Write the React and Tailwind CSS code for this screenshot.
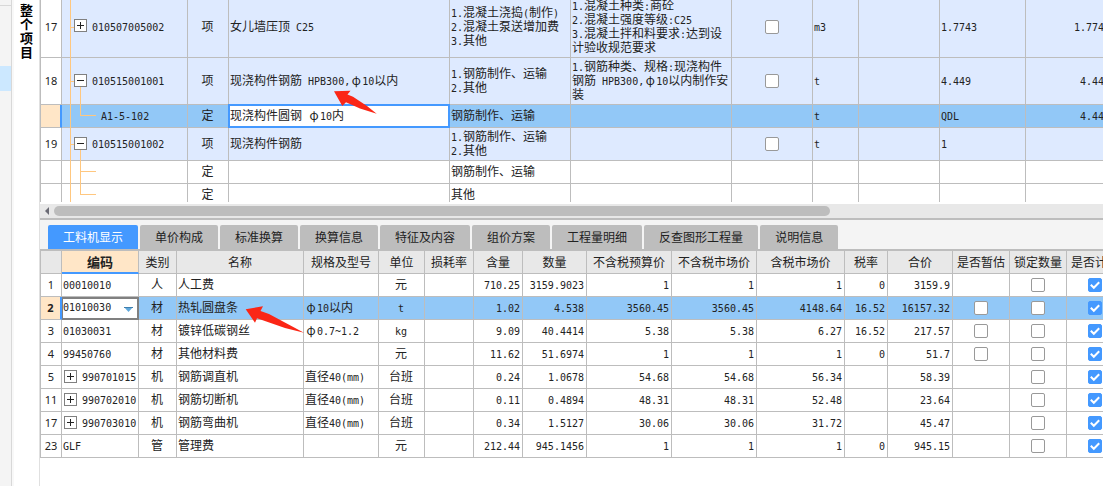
import { useState } from 'react'
import clsx from 'clsx'

const billCols = [
	'w-[21px]',
	'w-[126px]',
	'w-[41px]',
	'w-[221px]',
	'w-[121px]',
	'w-[161px]',
	'w-[81px]',
	'w-[46px]',
	'w-[81px]',
	'w-[86px]',
	'w-[87px]'
]

const billRows = [
	{
		no: '17',
		height: 'h-[62px]',
		code: '010507005002',
		sign: '+',
		kind: '项',
		name: '女儿墙压顶 C25',
		work: '1.混凝土浇捣(制作)\n2.混凝土泵送增加费\n3.其他',
		feature: '1.混凝土种类:商砼\n2.混凝土强度等级:C25\n3.混凝土拌和料要求:达到设\n计验收规范要求',
		unit: 'm3',
		expr: '1.7743',
		amount: '1.7743'
	},
	{
		no: '18',
		height: 'h-[47px]',
		code: '010515001001',
		sign: '-',
		kind: '项',
		name: '现浇构件钢筋 HPB300,φ10以内',
		work: '1.钢筋制作、运输\n2.其他',
		feature: '1.钢筋种类、规格:现浇构件\n钢筋 HPB300,φ10以内制作安\n装',
		unit: 't',
		expr: '4.449',
		amount: '4.449',
		arrow: true
	},
	{
		height: 'h-[23px]',
		child: 'last',
		code: 'A1-5-102',
		kind: '定',
		name: '现浇构件圆钢 φ10内',
		work: '钢筋制作、运输',
		unit: 't',
		expr: 'QDL',
		amount: '4.449',
		selected: true
	},
	{
		no: '19',
		height: 'h-[33px]',
		code: '010515001002',
		sign: '-',
		kind: '项',
		name: '现浇构件钢筋',
		work: '1.钢筋制作、运输\n2.其他',
		unit: 't',
		expr: '1'
	},
	{ height: 'h-[23px]', child: 'middle', kind: '定', work: '钢筋制作、运输' },
	{ height: 'h-[23px]', child: 'last', kind: '定', work: '其他' }
]

const tabs = [
	'工料机显示',
	'单价构成',
	'标准换算',
	'换算信息',
	'特征及内容',
	'组价方案',
	'工程量明细',
	'反查图形工程量',
	'说明信息'
]

const resourceCols = [
	{ width: 'w-[21px]', title: '' },
	{ width: 'w-[77px]', title: '编码' },
	{ width: 'w-[38px]', title: '类别' },
	{ width: 'w-[127px]', title: '名称' },
	{ width: 'w-[75px]', title: '规格及型号' },
	{ width: 'w-[46px]', title: '单位' },
	{ width: 'w-[49px]', title: '损耗率' },
	{ width: 'w-[49px]', title: '含量' },
	{ width: 'w-[64px]', title: '数量' },
	{ width: 'w-[85px]', title: '不含税预算价' },
	{ width: 'w-[85px]', title: '不含税市场价' },
	{ width: 'w-[88px]', title: '含税市场价' },
	{ width: 'w-[43px]', title: '税率' },
	{ width: 'w-[65px]', title: '合价' },
	{ width: 'w-[57px]', title: '是否暂估' },
	{ width: 'w-[57px]', title: '锁定数量' },
	{ width: 'w-[57px]', title: '是否计价' }
]

// nums: 含量, 数量, 不含税预算价, 不含税市场价, 含税市场价, 税率, 合价
const resources = [
	{ no: '1', code: '00010010', kind: '人', name: '人工费', unit: '元', nums: ['710.25', '3159.9023', '1', '1', '1', '0', '3159.9'] },
	{
		no: '2',
		code: '01010030',
		kind: '材',
		name: '热轧圆盘条',
		spec: 'φ10以内',
		unit: 't',
		nums: ['1.02', '4.538', '3560.45', '3560.45', '4148.64', '16.52', '16157.32'],
		estimate: true,
		selected: true
	},
	{
		no: '3',
		code: '01030031',
		kind: '材',
		name: '镀锌低碳钢丝',
		spec: 'φ0.7~1.2',
		unit: 'kg',
		nums: ['9.09', '40.4414', '5.38', '5.38', '6.27', '16.52', '217.57'],
		estimate: true
	},
	{
		no: '4',
		code: '99450760',
		kind: '材',
		name: '其他材料费',
		unit: '元',
		nums: ['11.62', '51.6974', '1', '1', '1', '0', '51.7'],
		estimate: true
	},
	{
		no: '5',
		code: '990701015',
		sign: '+',
		kind: '机',
		name: '钢筋调直机',
		spec: '直径40(mm)',
		unit: '台班',
		nums: ['0.24', '1.0678', '54.68', '54.68', '56.34', '', '58.39']
	},
	{
		no: '11',
		code: '990702010',
		sign: '+',
		kind: '机',
		name: '钢筋切断机',
		spec: '直径40(mm)',
		unit: '台班',
		nums: ['0.11', '0.4894', '48.31', '48.31', '52.48', '', '23.64']
	},
	{
		no: '17',
		code: '990703010',
		sign: '+',
		kind: '机',
		name: '钢筋弯曲机',
		spec: '直径40(mm)',
		unit: '台班',
		nums: ['0.34', '1.5127', '30.06', '30.06', '31.72', '', '45.47']
	},
	{ no: '23', code: 'GLF', kind: '管', name: '管理费', unit: '元', nums: ['212.44', '945.1456', '1', '1', '1', '0', '945.15'] }
]

// latin runs take half the width of a chinese character
const Mixed = ({ children = '' }) =>
	children.split(/([\x20-\x7e]+|φ)/).map((part, index) => {
		if (part === 'φ') {
			return (
				<span key={index} className="inline-block w-3 text-center leading-none">
					φ
				</span>
			)
		}
		return /^[\x20-\x7e]/.test(part) ? (
			<span key={index} className="font-['DejaVu_Sans_Mono',monospace] text-[10px] leading-none">
				{part}
			</span>
		) : (
			part
		)
	})

const Cell = ({ className, children }) => (
	<td className={clsx('border-r border-b border-[#bdbdbd] pt-0 pr-0.5 pb-0.5 pl-px whitespace-pre', className)}>
		{typeof children === 'string' ? <Mixed>{children}</Mixed> : children}
	</td>
)

const CheckCell = ({ label, hidden, defaultChecked }) => (
	<td className="border-r border-b border-[#bdbdbd] p-0">
		{!hidden && (
			<label className="relative mx-auto block size-3.5">
				<input
					type="checkbox"
					aria-label={label}
					defaultChecked={defaultChecked}
					className="peer block size-3.5 appearance-none rounded-xs border border-[#999999] bg-white checked:border-[#4499ff] checked:bg-[#4499ff]"
				/>
				<svg
					viewBox="0 0 14 14"
					className="pointer-events-none absolute inset-0 hidden size-3.5 fill-none stroke-white peer-checked:block"
				>
					<path d="M2.8 6.8 L5.8 9.8 L11.2 4.2" strokeWidth="2" />
				</svg>
			</label>
		)}
	</td>
)

const Toggle = ({ sign }) => (
	<button title={sign === '+' ? '展开' : '折叠'} className="size-[13px] shrink-0 border border-[#808080] bg-white">
		<svg viewBox="0 0 11 11" className="block size-full stroke-[#222222]" shapeRendering="crispEdges">
			<path d={sign === '+' ? 'M2 5.5 H9 M5.5 2 V9' : 'M2 5.5 H9'} />
		</svg>
	</button>
)

const TreeLines = ({ row }) => (
	<>
		<span className="absolute top-0 -bottom-px left-2 w-px bg-[#ffc77f]" />
		{row.sign && <span className="absolute top-1/2 left-2 h-px w-1 bg-[#ffc77f]" />}
		{row.sign === '-' && <span className="absolute top-1/2 -bottom-px left-[18px] w-px bg-[#ffc77f]" />}
		{row.child && (
			<>
				<span className="absolute top-0 left-[18px] h-1/2 w-4 border-b border-l border-[#ffc77f]" />
				{row.child === 'middle' && <span className="absolute top-1/2 -bottom-px left-[18px] w-px bg-[#ffc77f]" />}
			</>
		)}
	</>
)

const RowNumber = ({ selected, children }) => (
	<th
		className={clsx(
			"border-b border-[#bdbdbd] p-0 text-center font-['Noto_Sans',sans-serif] text-[11px]",
			selected ? 'border-r-2 border-r-[#4499ff] bg-[#ffe6c7] font-bold' : 'border-r bg-white font-normal'
		)}
	>
		{children}
	</th>
)

const BillTable = () => (
	<div className="mb-0.5 h-[202px] overflow-hidden">
		<table className="-mt-1 w-[1072px] table-fixed border-separate border-spacing-0 border-l border-[#bdbdbd]">
			<colgroup>
				{billCols.map((width, index) => (
					<col key={index} className={width} />
				))}
			</colgroup>
			<tbody>
				{billRows.map((row, index) => (
					<tr key={index} className={clsx(row.height, row.selected ? 'bg-[#92c8f7]' : row.no ? 'bg-[#deeaff]' : 'bg-white')}>
						<RowNumber selected={row.selected}>{row.no}</RowNumber>
						<Cell className="relative">
							<TreeLines row={row} />
							<div className={clsx('relative flex items-center', row.child ? 'pl-[38px]' : 'gap-[5px] pl-[11px]')}>
								{row.sign && <Toggle sign={row.sign} />}
								<span>
									<Mixed>{row.code}</Mixed>
								</span>
							</div>
						</Cell>
						<Cell className="text-center">{row.kind}</Cell>
						<Cell className={clsx('relative', row.selected && 'bg-white')}>
							{row.selected && <span className="absolute -inset-px z-10 border-2 border-[#4499ff]" />}
							<Mixed>{row.name}</Mixed>
							{row.arrow && (
								<svg
									viewBox="0 0 44 24"
									className="pointer-events-none absolute top-8 left-[104px] z-20 h-6 w-11 fill-[#fb2616]"
								>
									<path d="M1 1.3 L17.5 .7 L14.5 4.5 L20 6.7 L34 16 L43.7 23.8 L27 18.5 L13 12.3 L9.3 16 Z" />
								</svg>
							)}
						</Cell>
						<Cell>{row.work}</Cell>
						<Cell>{row.feature}</Cell>
						<CheckCell label={`${row.code} 主要清单`} hidden={!row.no} />
						<Cell>{row.unit}</Cell>
						<Cell />
						<Cell>{row.expr}</Cell>
						<Cell className="text-right">{row.amount}</Cell>
					</tr>
				))}
			</tbody>
		</table>
	</div>
)

const ResourceTable = () => (
	<table className="w-[1084px] table-fixed border-separate border-spacing-0 border-l border-[#bdbdbd]">
		<colgroup>
			{resourceCols.map((col, index) => (
				<col key={index} className={col.width} />
			))}
		</colgroup>
		<thead>
			<tr className="h-[23px] bg-[#e8e8e8]">
				{resourceCols.map((col) => (
					<th
						key={col.title}
						className={clsx(
							'border-r border-[#bdbdbd] p-0 whitespace-nowrap',
							col.title === '编码' ? 'border-b-2 border-b-[#4499ff] bg-[#ffe6c7] text-[13px] font-bold' : 'border-b font-normal'
						)}
					>
						{col.title}
					</th>
				))}
			</tr>
		</thead>
		<tbody>
			{resources.map((item) => (
				<tr key={item.no} className={clsx('h-[23px]', item.selected ? 'bg-[#92c8f7]' : 'bg-white')}>
					<RowNumber selected={item.selected}>{item.no}</RowNumber>
					{item.selected ? (
						<td className="relative border-r border-b border-[#808080] p-0">
							<select
								aria-label="编码"
								className="block h-[22px] w-full appearance-none border-t-2 border-r border-b border-l border-[#808080] bg-white pb-0.5 font-['DejaVu_Sans_Mono',monospace] text-[10px]"
							>
								<option>{item.code}</option>
							</select>
							<svg viewBox="0 0 9 5" className="pointer-events-none absolute top-2.5 right-[5px] h-[5px] w-[9px]">
								<path d="M0 0 H9 L4.5 5 Z" fill="#5fa8dc" />
								<path d="M0 .5 H9" stroke="#3f7fae" />
							</svg>
						</td>
					) : (
						<Cell>
							<div className={clsx('flex items-center gap-[5px]', item.sign && 'pl-px')}>
								{item.sign && <Toggle sign={item.sign} />}
								<span>
									<Mixed>{item.code}</Mixed>
								</span>
							</div>
						</Cell>
					)}
					<Cell className="text-center">{item.kind}</Cell>
					<Cell className="relative">
						<Mixed>{item.name}</Mixed>
						{item.selected && (
							<svg
								viewBox="0 0 60 28"
								className="pointer-events-none absolute top-2 left-[68px] z-20 h-7 w-[60px] fill-[#fb2616]"
							>
								<path d="M.7 4.3 L18 1.3 L15.5 6 L24 9 L59 27.8 L40 23 L12 13.3 L10 17.7 Z" />
							</svg>
						)}
					</Cell>
					<Cell>{item.spec}</Cell>
					<Cell className="text-center">{item.unit}</Cell>
					<Cell />
					{item.nums.map((num, index) => (
						<Cell key={index} className="text-right">
							{num}
						</Cell>
					))}
					<CheckCell label={`${item.name} 是否暂估`} hidden={!item.estimate} />
					<CheckCell label={`${item.name} 锁定数量`} />
					<CheckCell label={`${item.name} 是否计价`} defaultChecked />
				</tr>
			))}
		</tbody>
	</table>
)

const App = () => {
	const [activeTab, setActiveTab] = useState(0)

	return (
		<div className="flex h-screen w-full overflow-hidden bg-white font-['Noto_Sans_CJK_SC',sans-serif] text-xs leading-[14px] text-[#222222]">
			<aside className="w-3 shrink-0 border-r border-[#d8d8d8] bg-[#f4f4f4]">
				<div className="h-1.5 border-b border-[#d8d8d8]" />
				<div className="mt-[60px] h-[25px] bg-[#cce8ff]" />
			</aside>
			<div className="flex w-7 shrink-0 justify-center border-r border-l-2 border-r-[#e0e0e0] border-l-[#f8f8f8] pt-[3px]">
				<h1 className="w-[13px] text-[13px] leading-[14px] font-bold break-all text-black">整个项目</h1>
			</div>
			<main className="min-w-0 flex-1 overflow-hidden">
				<BillTable />
				<div className="flex h-4 items-center border-b-2 border-[#bdbdbd] bg-[#e8e8e8]">
					<button title="向左滚动" className="flex w-3.5 shrink-0 justify-center">
						<svg viewBox="0 0 4 8" className="h-2 w-1 fill-[#6b6b75]">
							<path d="M4 0 V8 L0 4 Z" />
						</svg>
					</button>
					<div className="h-2.5 w-[73%] rounded-full bg-[#bdbdbd]" />
				</div>
				<div className="flex gap-0.5 border-b-2 border-[#bdbdbd] bg-[#f4f4f4] pt-[5px] pl-2">
					{tabs.map((tab, index) => (
						<button
							key={tab}
							onClick={() => setActiveTab(index)}
							className={clsx(
								'h-6 shrink-0 rounded-t-xs px-[15px] whitespace-nowrap',
								index === activeTab ? 'bg-[#4499ff] text-white' : 'bg-[#bdbdbd]'
							)}
						>
							{tab}
						</button>
					))}
				</div>
				<ResourceTable />
			</main>
		</div>
	)
}

export default App
